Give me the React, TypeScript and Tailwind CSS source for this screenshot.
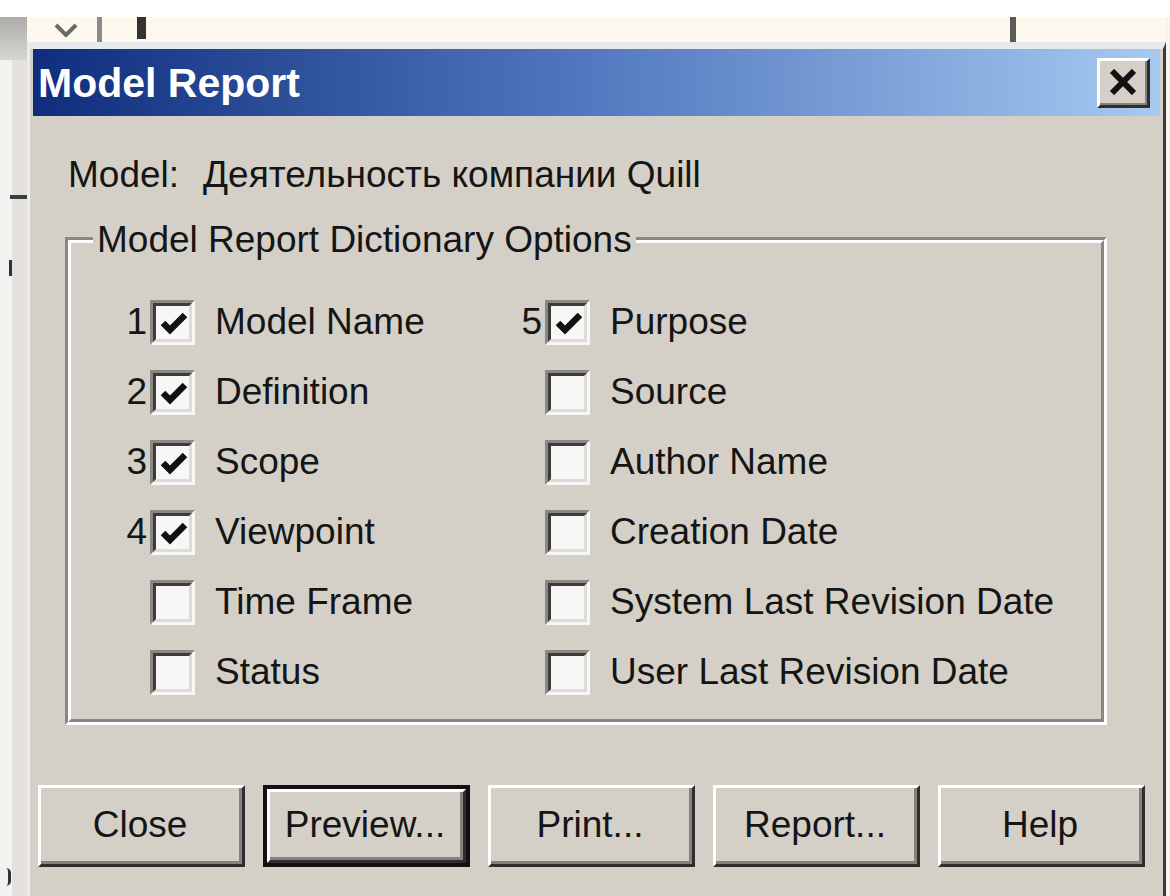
import React from "react";

const ui = "font-['Liberation_Sans',Arial,sans-serif]";

function CheckBox({ checked }: { checked: boolean }) {
  return (
    <div className="relative w-[45px] h-[45px] shrink-0 border-t-[3px] border-l-[3px] border-t-[#8b8884] border-l-[#8b8884] border-r-[3px] border-b-[3px] border-r-[#f7f7f5] border-b-[#f7f7f5]">
      <div className="w-full h-full border-t-[3px] border-l-[3px] border-t-[#3b3b3b] border-l-[#3b3b3b] border-r-[3px] border-b-[3px] border-r-[#dedcd8] border-b-[#dedcd8] bg-[#f7f7f6]" />
      {checked && (
        <svg
          className="absolute -left-[3px] -top-[3px]"
          width="45"
          height="45"
          viewBox="0 0 45 45"
        >
          <polyline
            points="13,23 20,30 35,15"
            fill="none"
            stroke="#111"
            strokeWidth="6.5"
          />
        </svg>
      )}
    </div>
  );
}

function Option({
  n,
  label,
  checked,
}: {
  n?: string;
  label: string;
  checked: boolean;
}) {
  return (
    <div className="flex items-center h-[70px]">
      <span className="w-[26px] pr-[3px] text-right">{n ?? ""}</span>
      <CheckBox checked={checked} />
      <span className="ml-[20px] whitespace-nowrap">{label}</span>
    </div>
  );
}

function Button({ label, isDefault }: { label: string; isDefault?: boolean }) {
  const face = (
    <div className="h-full w-full border-t-[3px] border-l-[3px] border-t-white border-l-white border-r-[3px] border-b-[3px] border-r-[#2e2e2e] border-b-[#2e2e2e]">
      <div className="h-full w-full border-r-[3px] border-b-[3px] border-r-[#85827d] border-b-[#85827d] flex items-center justify-center">
        {label}
      </div>
    </div>
  );
  return isDefault ? (
    <div className="w-[207px] h-[82px] shrink-0 border-[4px] border-[#111]">{face}</div>
  ) : (
    <div className="w-[207px] h-[82px] shrink-0">{face}</div>
  );
}

const left = [
  { n: "1", label: "Model Name", checked: true },
  { n: "2", label: "Definition", checked: true },
  { n: "3", label: "Scope", checked: true },
  { n: "4", label: "Viewpoint", checked: true },
  { label: "Time Frame", checked: false },
  { label: "Status", checked: false },
];

const right = [
  { n: "5", label: "Purpose", checked: true },
  { label: "Source", checked: false },
  { label: "Author Name", checked: false },
  { label: "Creation Date", checked: false },
  { label: "System Last Revision Date", checked: false },
  { label: "User Last Revision Date", checked: false },
];

export default function App() {
  return (
    <div
      className={`w-[1170px] h-[896px] overflow-hidden bg-white flex flex-col ${ui} text-[37px] leading-[42px] text-[#151515]`}
    >
      <div className="h-[17px] shrink-0 bg-white" />
      <div className="flex flex-1 min-h-0">
        {/* window behind, left edge */}
        <div className="w-[27px] shrink-0 flex flex-col bg-[#f3f2f0]">
          <div className="h-[43px] shrink-0 bg-gradient-to-b from-[#aeada9] to-[#d6d5d1]" />
          <div className="flex flex-1">
            <div className="w-[12px] flex flex-col">
              <div className="h-[178px]" />
              <div className="h-[22px]" />
              <div className="ml-[9px] w-[3px] h-[16px] bg-[#333]" />
              <div className="flex-1" />
              <div className="ml-[6px] w-[5px] h-[18px] mb-[10px] rounded-r-full border-r-[3px] border-[#333]" />
            </div>
            <div className="flex-1 flex flex-col bg-[#e2e1de]">
              <div className="h-[135px]" />
              <div className="h-[4px] bg-[#3c3c3c] -ml-[2px]" />
            </div>
          </div>
        </div>

        <div className="flex-1 flex flex-col min-w-0">
          {/* strip of the window behind */}
          <div className="h-[25px] shrink-0 bg-[#fcf8ec] flex items-stretch">
            <div className="w-[26px]" />
            <div className="w-[26px] flex items-start justify-center pt-[6px]">
              <svg width="24" height="14" viewBox="0 0 24 14">
                <polyline points="2,2 12,12 22,2" fill="none" stroke="#6a6a6a" strokeWidth="4" />
              </svg>
            </div>
            <div className="w-[18px]" />
            <div className="w-[5px] bg-[#8a8a8a]" />
            <div className="w-[35px]" />
            <div className="w-[9px] bg-[#333] mb-[3px]" />
            <div className="w-[864px]" />
            <div className="w-[6px] bg-[#5a5a5a]" />
          </div>

          {/* dialog */}
          <div className="flex-1 flex flex-col bg-[#d4d0c8] border-t-[7px] border-t-[#e8e9ec] border-l-[3px] border-l-[#ecebe7] border-r-[3px] border-r-[#3a3a3a] px-[3px]">
            <div className="h-[67px] shrink-0 flex items-center justify-between bg-gradient-to-r from-[#0f2d7c] via-[#5479c0] to-[#a6caf0] pl-[5px] pr-[10px]">
              <span className="font-bold text-[41px] text-white tracking-[0px]">Model Report</span>
              <div className="w-[53px] h-[50px] bg-[#d4d0c8] border-t-[3px] border-l-[3px] border-t-white border-l-white border-r-[3px] border-b-[3px] border-r-[#2e2e2e] border-b-[#2e2e2e]">
                <div className="w-full h-full border-r-[2px] border-b-[2px] border-r-[#85827d] border-b-[#85827d] flex items-center justify-center">
                  <svg width="28" height="26" viewBox="0 0 28 26">
                    <path d="M3 2 L25 24 M25 2 L3 24" stroke="#111" strokeWidth="6" />
                  </svg>
                </div>
              </div>
            </div>

            <div className="mt-[38px] h-[42px] pl-[35px] flex items-center">
              <span>Model:</span>
              <span className="ml-[24px]">Деятельность компании Quill</span>
            </div>

            <div className="relative mt-[41px] ml-[32px] mr-[53px] border-t-[3px] border-l-[3px] border-t-[#8a8783] border-l-[#8a8783] border-r-[3px] border-b-[3px] border-r-white border-b-white">
              <div className="border-t-[3px] border-l-[3px] border-t-white border-l-white border-r-[3px] border-b-[3px] border-r-[#8a8783] border-b-[#8a8783] pt-[44px] pb-[12px] pl-[53px] grid grid-cols-[395px_1fr]">
                <div className="flex flex-col">
                  {left.map((o) => (
                    <Option key={o.label} n={o.n} label={o.label} checked={o.checked} />
                  ))}
                </div>
                <div className="flex flex-col">
                  {right.map((o) => (
                    <Option key={o.label} n={o.n} label={o.label} checked={o.checked} />
                  ))}
                </div>
              </div>
              <span className="absolute left-[25px] -top-[21px] px-[4px] bg-[#d4d0c8] whitespace-nowrap">
                Model Report Dictionary Options
              </span>
            </div>

            <div className="mt-[60px] ml-[5px] flex gap-[18px]">
              <Button label="Close" />
              <Button label="Preview..." isDefault />
              <Button label="Print..." />
              <Button label="Report..." />
              <Button label="Help" />
            </div>
          </div>
        </div>

        <div className="w-[4px] shrink-0 bg-[#f4f4f2]" />
      </div>
    </div>
  );
}
